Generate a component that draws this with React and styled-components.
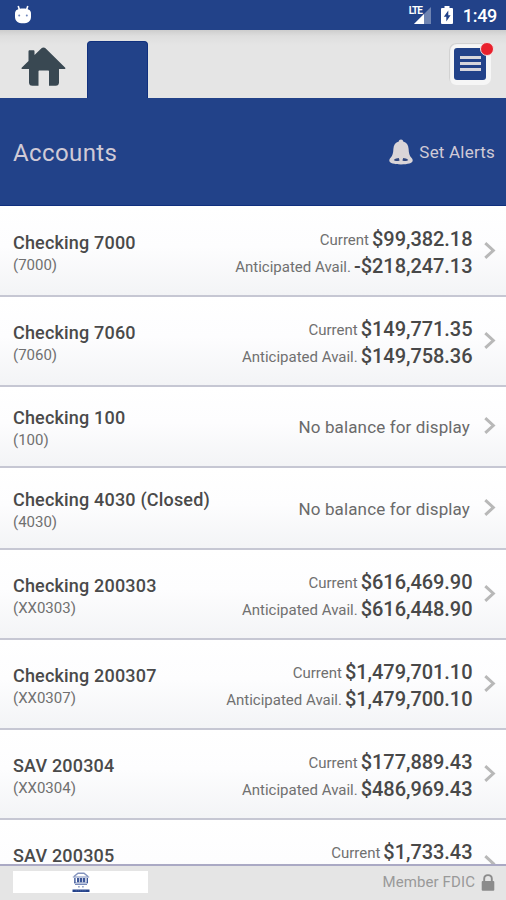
import React from 'react';
import styled, { createGlobalStyle } from 'styled-components';

const accounts = [
  { name: 'Checking 7000', number: '(7000)', current: '$99,382.18', avail: '-$218,247.13' },
  { name: 'Checking 7060', number: '(7060)', current: '$149,771.35', avail: '$149,758.36' },
  { name: 'Checking 100', number: '(100)' },
  { name: 'Checking 4030 (Closed)', number: '(4030)' },
  { name: 'Checking 200303', number: '(XX0303)', current: '$616,469.90', avail: '$616,448.90' },
  { name: 'Checking 200307', number: '(XX0307)', current: '$1,479,701.10', avail: '$1,479,700.10' },
  { name: 'SAV 200304', number: '(XX0304)', current: '$177,889.43', avail: '$486,969.43' },
  { name: 'SAV 200305', current: '$1,733.43' },
];

const AndroidIcon = () => (
  <svg width="18" height="20" viewBox="0 0 18 20">
    <path d="M4.200 1l1.300 4M13.800 1l-1.300 4" stroke="#fff" strokeWidth="1.6" />
    <path d="M1 8.500C1 5 4 3.600 9 3.600S17 5 17 8.500v3.200c0 4.400-3.200 6.600-8 6.600s-8-2.200-8-6.600z" fill="#fff" />
    <circle cx="5.200" cy="10.400" r="1" fill="#6f86bb" />
    <circle cx="12.800" cy="10.400" r="1" fill="#6f86bb" />
  </svg>
);

const SignalIcon = () => (
  <svg width="17" height="17" viewBox="0 0 17 17">
    <path d="M0 17L17 0v17z" fill="#fff" opacity="0.35" />
    <path d="M0 17L10 7v10z" fill="#fff" />
  </svg>
);

const BatteryIcon = () => (
  <svg width="12" height="18" viewBox="0 0 12 18">
    <path d="M3.500 0h5v2H11a1 1 0 0 1 1 1v14a1 1 0 0 1-1 1H1a1 1 0 0 1-1-1V3a1 1 0 0 1 1-1h2.500z" fill="#fff" />
    <path d="M7.300 4.500L2.800 10.800H5.300V15.500L9.600 9.300H7.300z" fill="#224289" />
  </svg>
);

const HomeIcon = () => (
  <svg width="45" height="40" viewBox="0 0 45 40">
    <path
      d="M22.500 .5c.8 0 1.500.3 2 .8L44 20.500c.8.900.4 1.500-.6 1.500H38v13.500c0 2-1.200 3.300-3.300 3.300H28V24.500c0-.6-.4-1-1-1h-8.500c-.6 0-1 .4-1 1v14.300h-6c-2.400 0-3.500-1.300-3.500-3.300V22H1.500c-1 0-1.400-.6-.6-1.500L7.500 14V4.500c0-.8.4-1.200 1.200-1.200h3.600c.8 0 1.200.4 1.200 1.200v3.600l7-6.800c.5-.5 1.200-.8 2-.8z"
      fill="#394852"
    />
  </svg>
);

const BellIcon = () => (
  <svg width="24" height="26" viewBox="0 0 24 26">
    <path
      d="M12 .5c1.300 0 2.100.8 2.200 2 3.400 1 5.200 3.600 5.400 7.200.2 4.200.8 6.900 2.600 8.900 1 1 1.500 1.900 1.500 3 0 2.600-5 3.900-11.700 3.900S.3 24.200.3 21.600c0-1.100.500-2 1.500-3 1.800-2 2.400-4.700 2.600-8.900.2-3.600 2-6.200 5.400-7.200.1-1.200.9-2 2.200-2z"
      fill="#dad5d8"
    />
    <path d="M4.800 21c1.500-1.400 3.300-1.900 5-2l.8 2.500c-2 .9-4.500.9-5.800-.5zM19.200 21c-1.500-1.400-3.300-1.900-5-2l-.8 2.500c2 .9 4.500.9 5.800-.5z" fill="#31477f" />
  </svg>
);

const ChevronIcon = () => (
  <svg width="12" height="18" viewBox="0 0 12 18">
    <path d="M1.300 1.200L9.300 8.500l-8 7.300" fill="none" stroke="#b8b8b8" strokeWidth="3" />
  </svg>
);

const BankIcon = () => (
  <svg width="18" height="21" viewBox="0 0 18 21">
    <path d="M2 4.500L6 1.200h6l4 3.300" fill="none" stroke="#8393bd" strokeWidth="1.400" />
    <path d="M.8 5h16.400M2 11h14M3 12.500h12" stroke="#7789b9" strokeWidth="1" />
    <path d="M2.200 6h1.400v5H2.200zM5 6h2.300v4.300H5zM8 6h2.300v4.300H8zM11 6h2.300v4.300H11zM14.600 6H16v5h-1.400z" fill="#3d5799" />
    <path d="M6 14h1.800v1.500H6zM10 14h1.800v1.500H10z" fill="#9aa8ca" />
    <path d="M.5 17.500h17V20H.5z" fill="#23418a" />
    <path d="M3.500 18.800h11" stroke="#637bb0" strokeWidth=".6" strokeDasharray="1.500 .7" />
  </svg>
);

const LockIcon = () => (
  <svg width="14" height="17" viewBox="0 0 14 17">
    <path d="M3.200 8V4.700C3.200 2.500 4.900 1.100 7 1.100s3.800 1.400 3.800 3.600V8" fill="none" stroke="#8b8b8b" strokeWidth="1.900" />
    <rect x=".7" y="7" width="12.600" height="9.700" rx="1" fill="#8b8b8b" />
  </svg>
);

const AccountItem = ({ account }) => {
  const hasBalance = !!account.current;

  return (
    <Row $tall={hasBalance}>
      <AccountInfo>
        <AccountName>{account.name}</AccountName>
        <AccountNumber>{account.number}</AccountNumber>
      </AccountInfo>
      {hasBalance ? (
        <Balances>
          <BalanceLine><Label>Current</Label><Amount>{account.current}</Amount></BalanceLine>
          {account.avail && <BalanceLine><Label>Anticipated Avail.</Label><Amount>{account.avail}</Amount></BalanceLine>}
        </Balances>
      ) : (
        <NoBalance>No balance for display</NoBalance>
      )}
      <ChevronIcon />
    </Row>
  );
};

const App = () => {
  return (
    <Screen>
      <GlobalStyle />
      <StatusBar>
        <AndroidIcon />
        <StatusIcons>
          <Signal>
            <SignalIcon />
            <Network>LTE</Network>
          </Signal>
          <BatteryIcon />
          <Clock>1:49</Clock>
        </StatusIcons>
      </StatusBar>
      <NavBar>
        <HomeButton><HomeIcon /></HomeButton>
        <ActiveTab />
        <MenuButton>
          <MenuFace><MenuLine /><MenuLine /><MenuLine /></MenuFace>
          <Badge />
        </MenuButton>
      </NavBar>
      <Header>
        <Title>Accounts</Title>
        <AlertButton><BellIcon />Set Alerts</AlertButton>
      </Header>
      <List>
        {accounts.map((account) => (
          <AccountItem key={account.name} account={account} />
        ))}
      </List>
      <Footer>
        <LogoBox><BankIcon /></LogoBox>
        <Member>Member FDIC <LockIcon /></Member>
      </Footer>
    </Screen>
  );
};

const GlobalStyle = createGlobalStyle`
  * {
    box-sizing: border-box;
  }
  body {
    margin: 0;
    font-family: Roboto, sans-serif;
    overflow: hidden;
  }
  svg {
    display: block;
    flex-shrink: 0;
  }
`;

const Screen = styled.div`
  display: flex;
  flex-direction: column;
  width: 506px;
  height: 900px;
  background: #fff;
`;

const StatusBar = styled.div`
  display: flex;
  justify-content: space-between;
  height: 30px;
  flex-shrink: 0;
  padding: 5px 9px 0 14px;
  background: #224289;
`;

const StatusIcons = styled.div`
  display: flex;
  align-items: flex-start;
  padding-top: 1px;
`;

const Signal = styled.div`
  position: relative;
  padding-top: 1px;
  margin-right: 10px;
`;

const Network = styled.span`
  position: absolute;
  left: -5px;
  top: 0;
  font-size: 10px;
  line-height: 10px;
  font-weight: 700;
  letter-spacing: -1px;
  color: #fff;
  background: #224289;
`;

const Clock = styled.span`
  margin-left: 10px;
  font-size: 18px;
  line-height: 20px;
  font-weight: 500;
  letter-spacing: -0.300px;
  color: #fff;
`;

const NavBar = styled.div`
  display: flex;
  align-items: flex-end;
  height: 67.500px;
  flex-shrink: 0;
  padding-right: 15px;
  background: linear-gradient(#cdcdcd 0, #dedede 6px, #e5e5e5 15px, #e5e5e5 100%);
`;

const HomeButton = styled.div`
  width: 86.500px;
  padding: 0 0 10.500px 21px;
`;

const ActiveTab = styled.div`
  width: 61px;
  height: 57px;
  border: 1px solid #10307e;
  border-bottom: 0;
  border-radius: 4px 4px 0 0;
  background: #224289;
`;

const MenuButton = styled.div`
  position: relative;
  width: 42px;
  height: 42px;
  padding: 5px;
  margin: 0 0 13px auto;
  border-radius: 7px;
  background: #f6f6f6;
  box-shadow: inset 1px 1px 1px #cfcfcf;
`;

const MenuFace = styled.div`
  display: flex;
  flex-direction: column;
  align-items: center;
  justify-content: center;
  gap: 3px;
  width: 32px;
  height: 32px;
  border-radius: 3px;
  background: #224289;
`;

const MenuLine = styled.span`
  width: 21px;
  height: 3px;
  background: #d7d6dc;
`;

const Badge = styled.span`
  position: absolute;
  top: -1px;
  right: -3px;
  width: 14px;
  height: 14px;
  border: 1px solid #f3e1e2;
  border-radius: 50%;
  background: #e9202c;
`;

const Header = styled.div`
  display: flex;
  align-items: center;
  justify-content: space-between;
  height: 108.500px;
  flex-shrink: 0;
  padding: 1.500px 11px 0 13px;
  border-bottom: 1px solid #10307e;
  background: #224289;
  color: #d0cad6;
`;

const Title = styled.div`
  padding-top: 1px;
  font-size: 24px;
  letter-spacing: 0.400px;
`;

const AlertButton = styled.div`
  display: flex;
  align-items: center;
  gap: 6px;
  font-size: 17px;
  letter-spacing: 0.200px;
`;

const List = styled.div`
  flex: 1;
  min-height: 0;
  padding-top: 0.500px;
  overflow: hidden;
`;

const Row = styled.div`
  display: flex;
  align-items: center;
  height: ${props => props.$tall ? '90px' : '81.500px'};
  padding: 0 10px 0 13px;
  border-bottom: 2px solid #c6c7d3;
  background: linear-gradient(#fff 0%, #fdfdfe 45%, #f3f4f6 100%);
`;

const AccountInfo = styled.div`
  flex: 1;
  padding-top: 6px;
`;

const AccountName = styled.div`
  font-size: 18px;
  line-height: 22px;
  font-weight: 500;
  letter-spacing: 0.180px;
  color: #4a4a4a;
`;

const AccountNumber = styled.div`
  min-height: 22px;
  font-size: 15px;
  line-height: 22px;
  color: #707070;
`;

const Balances = styled.div`
  min-height: 58px;
  padding: 4px 11.500px 0 0;
`;

const BalanceLine = styled.div`
  display: flex;
  align-items: center;
  justify-content: flex-end;
  height: 27px;
  line-height: 27px;
`;

const Label = styled.span`
  padding-top: 2px;
  margin-right: 3px;
  font-size: 15px;
  line-height: 20px;
  color: #707070;
`;

const Amount = styled.span`
  font-size: 20px;
  font-weight: 500;
  letter-spacing: -0.050px;
  color: #484848;
`;

const NoBalance = styled.div`
  padding: 2px 14px 0 0;
  font-size: 17px;
  letter-spacing: 0.130px;
  color: #6a6a6a;
`;

const Footer = styled.div`
  display: flex;
  align-items: flex-start;
  justify-content: space-between;
  height: 36px;
  flex-shrink: 0;
  padding: 5px 11px 0 13px;
  border-top: 2px solid #aaa9c4;
  background: #e5e5e5;
`;

const LogoBox = styled.div`
  display: flex;
  justify-content: center;
  width: 135px;
  height: 22px;
  padding-top: 1px;
  background: #fff;
`;

const Member = styled.div`
  display: flex;
  align-items: center;
  gap: 6px;
  font-size: 15px;
  line-height: 23px;
  letter-spacing: 0.100px;
  color: #999;
`;

export default App;
